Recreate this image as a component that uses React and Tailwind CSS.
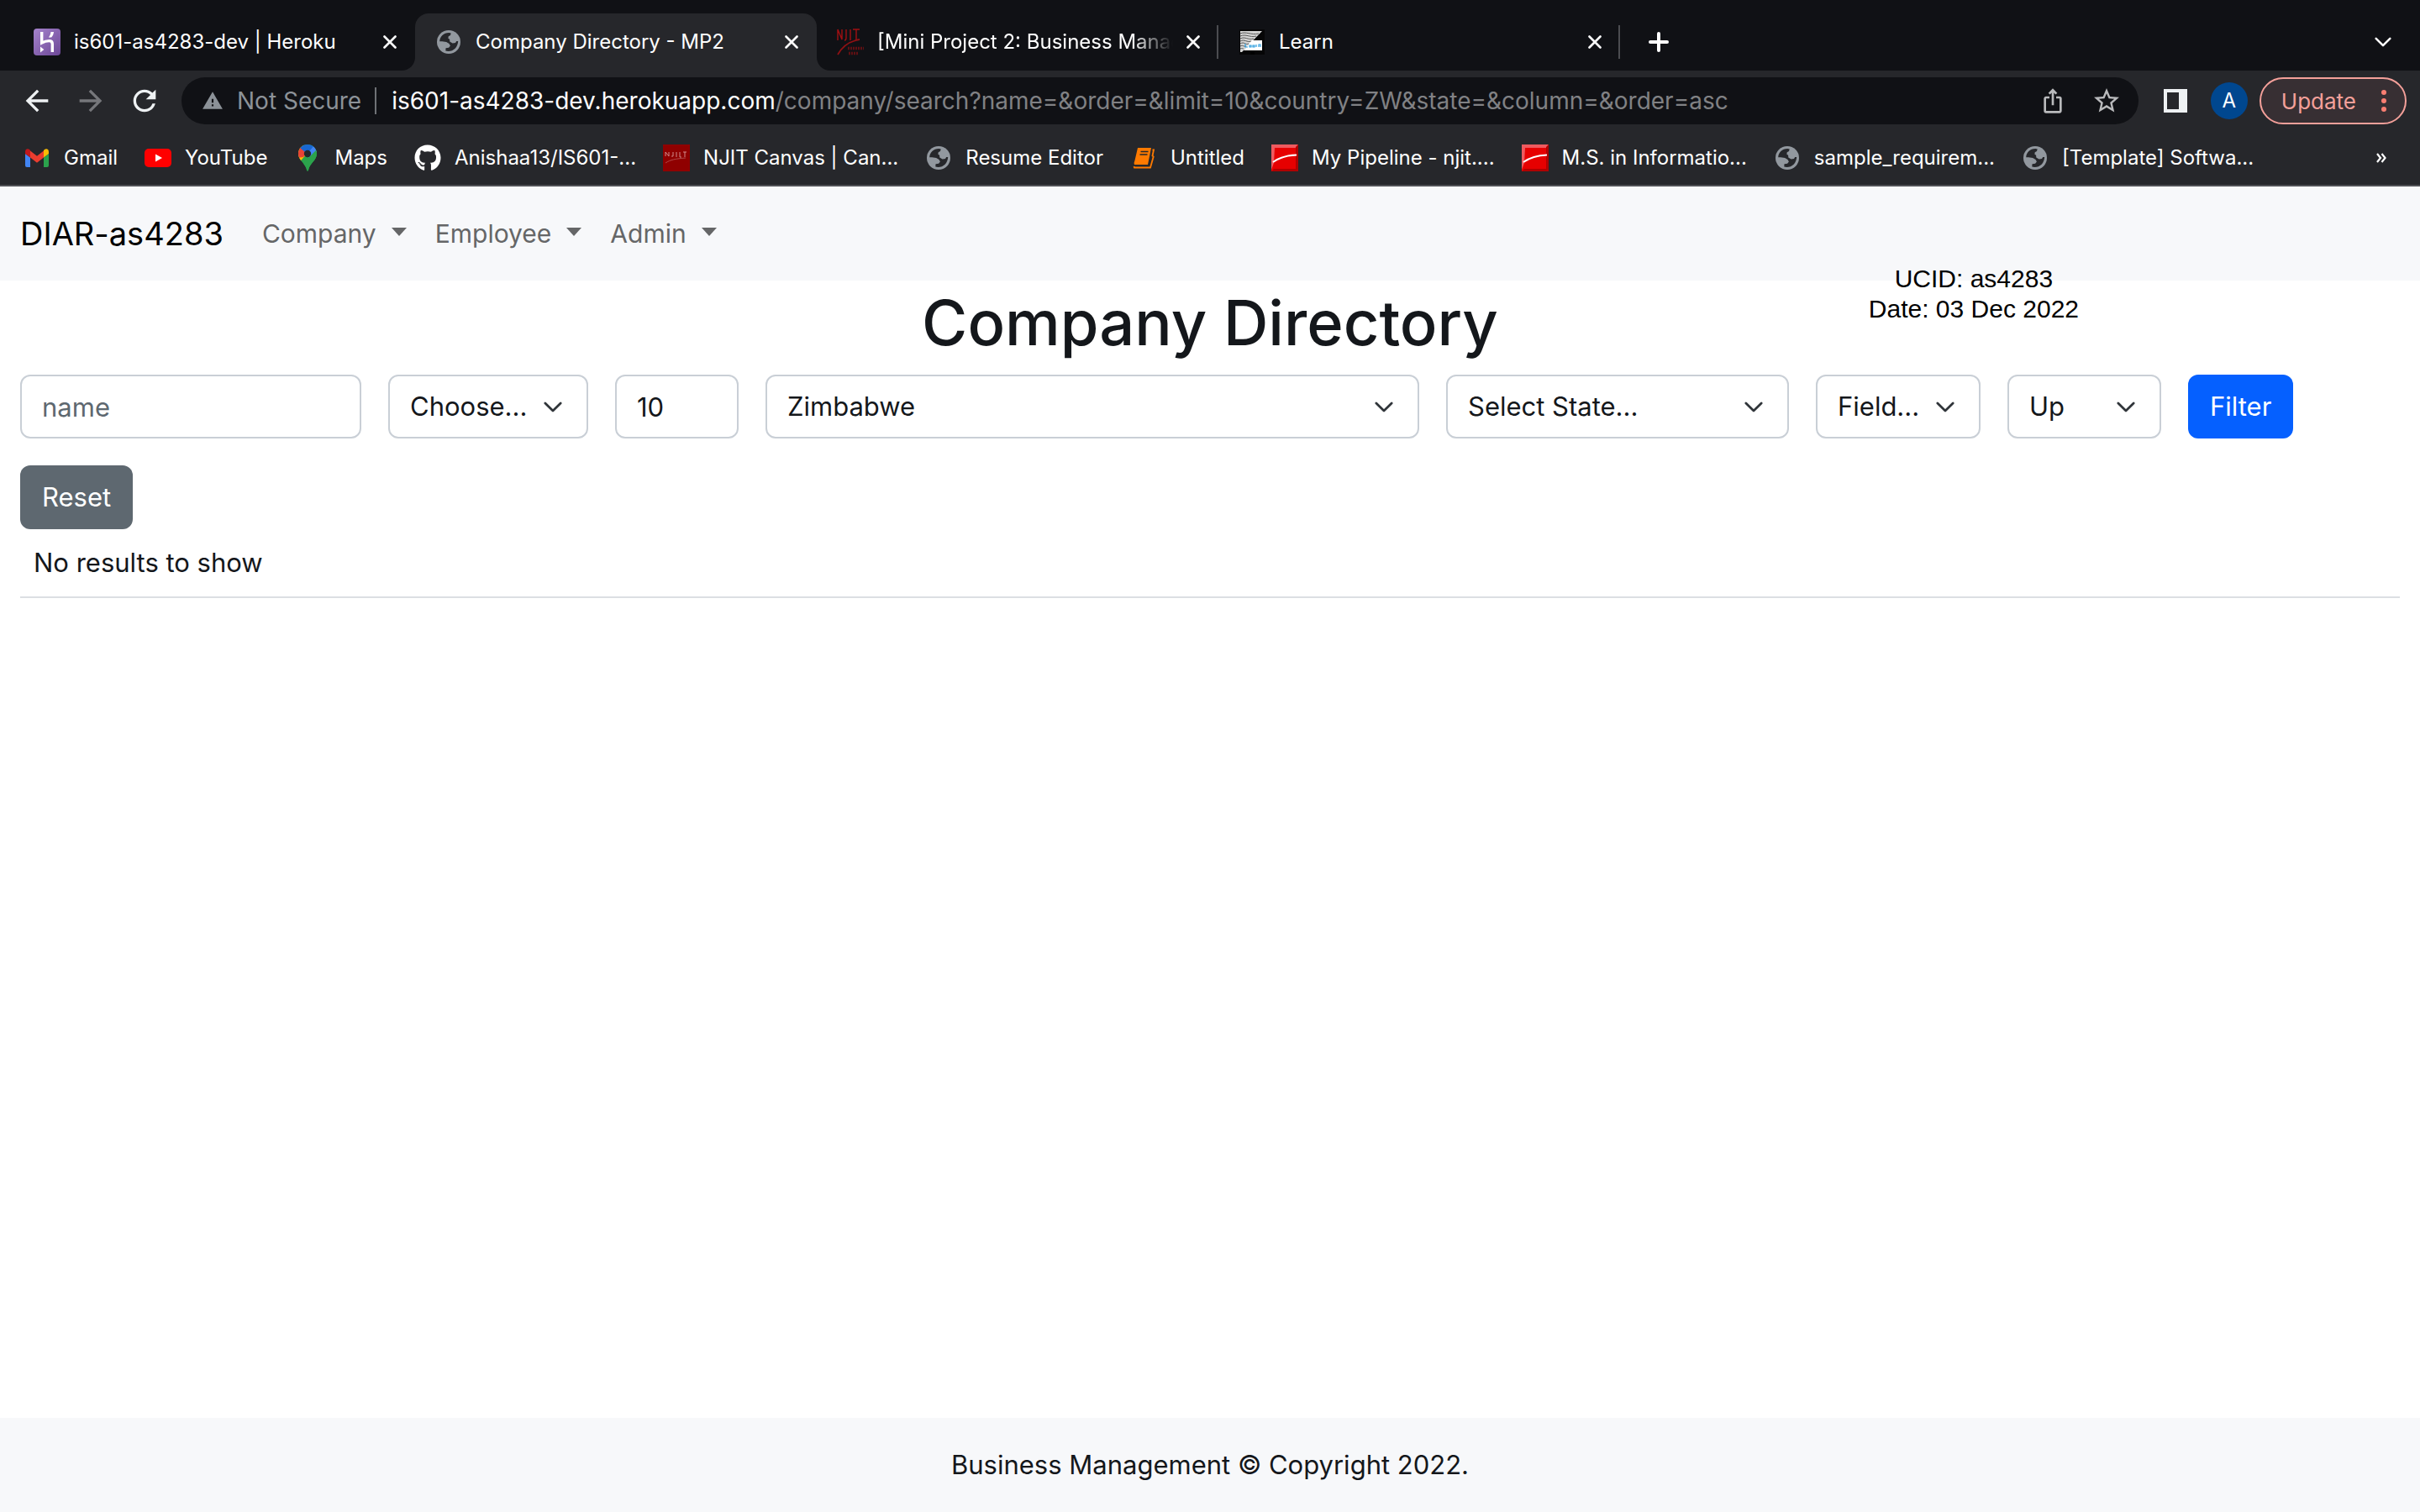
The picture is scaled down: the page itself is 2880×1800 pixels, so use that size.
import {
  MdArrowBack,
  MdArrowForward,
  MdIosShare,
  MdRefresh,
  MdStarBorder,
  MdWarning,
} from "react-icons/md";
import { FaGithub } from "react-icons/fa";

/* ---------- site icons ---------- */

function HerokuIcon() {
  return (
    <svg viewBox="0 0 32 32" className="size-8" aria-hidden="true">
      <defs>
        <linearGradient id="heroku" x1="0" y1="0" x2="1" y2="1">
          <stop offset="0" stopColor="#a583cc" />
          <stop offset="1" stopColor="#6c4796" />
        </linearGradient>
      </defs>
      <rect width="32" height="32" rx="4" fill="url(#heroku)" />
      <path d="M9.7 4v13c3-1.600 6-2.400 8.800-2.400 2.600 0 3.800 1.400 3.800 3.600V28" fill="none" stroke="#fff" strokeWidth="3.400" />
      <path d="M8 21.500l4.300 3.600L8 28.500zM20.500 4H24c-.3 2.700-1.300 4.800-2.900 6.600h-3.200c1.500-2 2.300-4 2.600-6.600z" fill="#fff" />
    </svg>
  );
}

function GlobeIcon() {
  return (
    <span className="flex size-8 items-center justify-center">
      <svg viewBox="0 0 28 28" className="size-7" aria-hidden="true">
        <circle cx="14" cy="14" r="14" fill="#92989f" />
        <path
          d="M3.200 13.200C3.500 7.500 8 3 14.500 3.100l2.200.4-.7 2.500-2.300 1.200-.3 2.600 1.700 1 .2 2.700 3.300 2 3.400-.5 1.200-2h2C24.800 20 20 25 13.500 25.100l-3.200-.6.2-3.200 3.600-.6 1.800-2.200-1.400-2.400-3.300-2-5-.8z"
          fill="#26272b"
        />
      </svg>
    </span>
  );
}

function NjitIcon() {
  return (
    <svg viewBox="0 0 32 32" className="size-8" fill="none" aria-hidden="true">
      <path d="M1 14V1l5 12V1M11 1v10q0 3-2 3M16 1v13M19 1h8M23 1v12" stroke="#a00f12" strokeWidth="1.400" />
      <path d="M1 31C6 22 15 15 27 13" stroke="#8e1114" strokeWidth="1.800" />
      <path d="M13 23.500h19M14 29.500h12" stroke="#7a1013" strokeWidth="3.400" strokeDasharray="2 1" opacity=".75" />
    </svg>
  );
}

function LearnIcon() {
  return (
    <svg viewBox="0 0 32 32" className="size-8" aria-hidden="true">
      <rect x="1" y="1" width="30" height="30" fill="#060607" />
      <path d="M2 3h26L4 28H2z" fill="#d5d5d5" />
      <path d="M2 6c7-3 12 2 22 0M2 9c7-3 11 2 19 0M2 12c6-3 9 2 16 0M2 15c5-3 8 2 13 0M2 18c5-3 6 2 10 0M2 21c3-2 4 1 7 0M2 24c2-1 3 0 4 0" fill="none" stroke="#555" />
      <path d="M16 14h12v12H6z" fill="#fff" />
      <path d="M8 18v4h3M13 20h2v2h-2zM17 20h2v2h-2zM21 22v-3M24 22v-3h2v3" fill="none" stroke="#2f9fe0" strokeWidth="1.200" />
      <path d="M14 28h5v3h-5z" fill="#000" />
    </svg>
  );
}

function GmailIcon() {
  return (
    <svg viewBox="0 0 32 32" className="size-8" aria-hidden="true">
      <path d="M2 11l6 4.500V27H4a2 2 0 0 1-2-2z" fill="#4285f4" />
      <path d="M24 15.500L30 11v14a2 2 0 0 1-2 2h-4z" fill="#2ba24c" />
      <path d="M8 7.500l8 6.200 8-6.200v8L16 21.700 8 15.500z" fill="#ea3d2f" />
      <path d="M2 8.500C2 5.500 5 4.300 7 6l1 1v8.500L2 11z" fill="#c0171c" />
      <path d="M30 8.500C30 5.500 27 4.300 25 6l-1 1v8.500L30 11z" fill="#fbbc04" />
    </svg>
  );
}

function YouTubeIcon() {
  return (
    <svg viewBox="0 0 32 32" className="size-8" aria-hidden="true">
      <rect y="5" width="32" height="22" rx="5" fill="#f00" />
      <path d="M13 11.500l8 4.500-8 4.500z" fill="#fff" />
    </svg>
  );
}

function MapsIcon() {
  return (
    <svg viewBox="0 0 32 32" className="size-8" aria-hidden="true">
      <defs>
        <clipPath id="pin">
          <path d="M16 0C9.900 0 5 4.900 5 11c0 8 8.300 11 10 19.500.3 1.700 1.700 1.700 2 0C18.700 22 27 19 27 11c0-6.100-4.900-11-11-11z" />
        </clipPath>
      </defs>
      <g clipPath="url(#pin)">
        <path d="M0 0h32v32H0z" fill="#2ba24c" />
        <path d="M4 24L22 3 8 0 0 12z" fill="#fbbc04" />
        <path d="M3 16l8-1 5-6L6 2 2 8z" fill="#ea4335" />
        <path d="M7 4l6 5 3 2 10-8L20-1H9z" fill="#1967d2" />
        <path d="M14 13L24 1l4 6-2 3-8 6z" fill="#4285f4" />
        <path d="M27 6l-9 9-7 8 6 9 12-16z" fill="#2ba24c" />
      </g>
      <circle cx="16" cy="11" r="4.200" fill="#26272b" />
    </svg>
  );
}

function GithubIcon() {
  return <FaGithub className="size-8 text-white" aria-hidden="true" />;
}

function CanvasIcon() {
  return (
    <svg viewBox="0 0 32 32" className="size-8" fill="none" aria-hidden="true">
      <rect width="32" height="32" fill="#8f0000" />
      <path d="M3 14V9l4 5V9M12 9v5h-2M16 9v6M20 9v6h2M24 9h4M26 9v6" stroke="#cf8a8a" />
      <path d="M3 22c6-4 12-5 24-6" stroke="#b04a4a" />
    </svg>
  );
}

function BookIcon() {
  return (
    <svg viewBox="0 0 32 32" className="size-8" aria-hidden="true">
      <path d="M9 4h16l-4 20H5q-1-2 .5-5z" fill="#ff7a00" />
      <path d="M26.500 6.500h1.500l-1.500 7 1.200 1L24 27.500H5l-.5-1.500" fill="none" stroke="#ff7a00" strokeWidth="1.800" />
      <path d="M12.500 8.500h9M11.500 12h9" stroke="#26272b" strokeWidth="1.400" />
    </svg>
  );
}

function SwooshIcon() {
  return (
    <svg viewBox="0 0 32 32" className="size-8" fill="none" aria-hidden="true">
      <rect width="32" height="32" fill="#e60000" />
      <path d="M0 0h32l-3 4H4L3 22l-3 8z" fill="#ee5a5f" />
      <path d="M32 0v32H0l3-3h26V3z" fill="#b00000" />
      <path d="M2 21c7-5 14-8 28-8.500" stroke="#fff" strokeWidth="2" />
    </svg>
  );
}

/* ---------- line icons ---------- */

function CloseIcon() {
  return (
    <svg viewBox="0 0 16 16" className="size-4" fill="none" stroke="currentColor" strokeWidth="2.600" strokeLinecap="round" aria-hidden="true">
      <path d="M1.500 1.500l13 13M14.500 1.500l-13 13" />
    </svg>
  );
}

function PlusIcon() {
  return (
    <svg viewBox="0 0 24 24" className="size-6" fill="none" stroke="currentColor" strokeWidth="4" strokeLinecap="round" aria-hidden="true">
      <path d="M12 2v20M2 12h20" />
    </svg>
  );
}

function ChevronIcon({ className }) {
  return (
    <svg viewBox="0 0 24 14" className={className} fill="none" stroke="currentColor" strokeWidth="3" strokeLinecap="round" strokeLinejoin="round" aria-hidden="true">
      <path d="M2 2l10 10L22 2" />
    </svg>
  );
}

function PanelIcon() {
  return (
    <svg viewBox="0 0 28 28" className="size-7" aria-hidden="true">
      <path fillRule="evenodd" d="M0 0h28v28H0zM4 4v20h14V4z" fill="#eef1f3" />
    </svg>
  );
}

function OverflowIcon() {
  return (
    <svg viewBox="0 0 12 12" className="size-3" fill="none" stroke="currentColor" strokeWidth="2.200" aria-hidden="true">
      <path d="M1 1l4 5-4 5M6.500 1l4 5-4 5" />
    </svg>
  );
}

/* ---------- browser window ---------- */

const tabs = [
  { title: "is601-as4283-dev | Heroku", Icon: HerokuIcon },
  { title: "Company Directory - MP2", Icon: GlobeIcon, active: true },
  { title: "[Mini Project 2: Business Manag", Icon: NjitIcon, divider: true, fade: true },
  { title: "Learn", Icon: LearnIcon, divider: true },
];

const bookmarks = [
  { label: "Gmail", Icon: GmailIcon },
  { label: "YouTube", Icon: YouTubeIcon },
  { label: "Maps", Icon: MapsIcon },
  { label: "Anishaa13/IS601-...", Icon: GithubIcon },
  { label: "NJIT Canvas | Can...", Icon: CanvasIcon },
  { label: "Resume Editor", Icon: GlobeIcon },
  { label: "Untitled", Icon: BookIcon },
  { label: "My Pipeline - njit....", Icon: SwooshIcon },
  { label: "M.S. in Informatio...", Icon: SwooshIcon },
  { label: "sample_requirem...", Icon: GlobeIcon },
  { label: "[Template] Softwa...", Icon: GlobeIcon },
];

function TabFlare({ className, d }) {
  return (
    <svg viewBox="0 0 16 16" className={className} aria-hidden="true">
      <path d={d} fill="#26272b" />
    </svg>
  );
}

function Tab({ title, Icon, active, divider, fade }) {
  return (
    <div
      className={
        "relative flex h-[68px] max-w-[478px] min-w-0 flex-1 items-center pr-[22px] pl-6 " +
        (active ? "rounded-t-2xl bg-[#26272b]" : "")
      }
    >
      {active && (
        <>
          <TabFlare className="absolute bottom-0 -left-4 size-4" d="M16 0v16H0C9 16 16 9 16 0z" />
          <TabFlare className="absolute -right-4 bottom-0 size-4" d="M0 0v16h16C7 16 0 9 0 0z" />
        </>
      )}
      <Icon />
      <span
        className={
          "ml-4 min-w-0 flex-1 whitespace-nowrap text-2xl text-white " +
          (fade ? "[mask-image:linear-gradient(to_right,black_86%,transparent)]" : "")
        }
      >
        {title}
      </span>
      <button type="button" aria-label={"Close " + title} className="ml-4 text-white">
        <CloseIcon />
      </button>
      {divider && <span className="absolute right-0 h-10 w-0.5 bg-[#4b4c50]" />}
    </div>
  );
}

function BrowserChrome() {
  return (
    <header className="border-b-2 border-[#4f5055] bg-[#26272b] text-white">
      <div className="flex items-center bg-[#101115] pt-4 pr-[34px] pl-4">
        <div className="flex min-w-0 flex-1 items-center">
          {tabs.map((tab) => (
            <Tab key={tab.title} {...tab} />
          ))}
          <button type="button" aria-label="New tab" className="ml-[34px]">
            <PlusIcon />
          </button>
        </div>
        <button type="button" aria-label="Search tabs">
          <ChevronIcon className="h-3 w-5" />
        </button>
      </div>

      <div className="flex items-center pt-2 pr-4 pl-6">
        <div className="flex items-center gap-6 pr-6">
          <button type="button" aria-label="Back" className="text-[#eef1f3]">
            <MdArrowBack className="size-10" />
          </button>
          <button type="button" aria-label="Forward" className="text-[#76777b]">
            <MdArrowForward className="size-10" />
          </button>
          <button type="button" aria-label="Reload" className="text-[#eef1f3]">
            <MdRefresh className="size-10" />
          </button>
        </div>
        <div className="flex h-14 min-w-0 flex-1 items-center rounded-full bg-[#101115] pr-5 pl-6 text-[28px]">
          <MdWarning className="size-[26px] shrink-0 text-[#8c9298]" aria-hidden="true" />
          <span className="ml-4 whitespace-nowrap text-[#8c9298]">Not Secure</span>
          <span className="ml-4 h-8 w-0.5 shrink-0 bg-[#6f7276]" />
          <p className="ml-[18px] min-w-0 flex-1 overflow-hidden whitespace-nowrap text-[#808184]">
            <span className="text-white">is601-as4283-dev.herokuapp.com</span>
            /company/search?name=&amp;order=&amp;limit=10&amp;country=ZW&amp;state=&amp;column=&amp;order=asc
          </p>
          <div className="flex items-center gap-[30px] text-[#b9babc]">
            <button type="button" aria-label="Share">
              <MdIosShare className="size-8" />
            </button>
            <button type="button" aria-label="Bookmark this page">
              <MdStarBorder className="size-9" />
            </button>
          </div>
        </div>
        <button type="button" aria-label="Side panel" className="ml-[30px]">
          <PanelIcon />
        </button>
        <button type="button" aria-label="Profile" className="ml-7 size-11 rounded-full bg-[#00478f] text-2xl">
          A
        </button>
        <button
          type="button"
          className="ml-[14px] flex h-14 items-center gap-[30px] rounded-full border-2 border-[#f4a09a] bg-[#372f33] pr-[22px] pl-6 text-[26px] text-[#f4a09a]"
        >
          Update
          <svg viewBox="0 0 6 26" className="h-[26px] w-1.5" fill="#f97e72" aria-hidden="true">
            <circle cx="3" cy="3" r="3" />
            <circle cx="3" cy="13" r="3" />
            <circle cx="3" cy="23" r="3" />
          </svg>
        </button>
      </div>

      <nav aria-label="Bookmarks" className="flex h-[72px] items-center justify-between pt-2 pr-10 pl-7">
        <ul className="flex items-center gap-8">
          {bookmarks.map(({ label, Icon }) => (
            <li key={label}>
              <a href="#" className="flex items-center gap-4 whitespace-nowrap text-2xl">
                <Icon />
                {label}
              </a>
            </li>
          ))}
        </ul>
        <button type="button" aria-label="More bookmarks">
          <OverflowIcon />
        </button>
      </nav>
    </header>
  );
}

/* ---------- site ---------- */

function SiteNav() {
  return (
    <nav className="flex h-28 items-center bg-[#f7f8fa] px-6">
      <a href="#" className="text-[38px] text-black">
        DIAR-as4283
      </a>
      <ul className="ml-[46px] flex items-center gap-[34px] text-[30px] text-[#656667]">
        {["Company", "Employee", "Admin"].map((name) => (
          <li key={name}>
            <button type="button" className="flex items-center gap-[18px]">
              {name}
              <svg viewBox="0 0 18 10" className="mb-1 h-2.5 w-[18px]" fill="currentColor" aria-hidden="true">
                <path d="M0 0h18l-9 10z" />
              </svg>
            </button>
          </li>
        ))}
      </ul>
    </nav>
  );
}

const field =
  "h-[76px] w-full appearance-none rounded-xl border-2 border-[#c9cfd6] bg-white px-6 text-[31px] text-[#14171b] placeholder:text-[#5e6870]";

function SelectField({ label, value, width }) {
  return (
    <div className={"relative " + width}>
      <select aria-label={label} className={field} defaultValue={value}>
        <option>{value}</option>
      </select>
      <ChevronIcon className="pointer-events-none absolute top-8 right-[31px] h-[13px] w-[22px] text-[#30353a]" />
    </div>
  );
}

export default function App() {
  return (
    <div className="flex min-h-screen flex-col bg-white font-['Inter',sans-serif] text-[#14171b]">
      <BrowserChrome />
      <div className="relative flex flex-1 flex-col">
        <SiteNav />
        <p className="absolute top-[92px] right-[406px] text-center font-['Liberation_Sans',Arial,sans-serif] text-[30px] leading-9 text-black">
          UCID: as4283
          <br />
          Date: 03 Dec 2022
        </p>
        <main className="flex-1 px-6">
          <h1 className="mb-3 text-center text-[74px] leading-[100px] font-medium">Company Directory</h1>
          <form className="flex flex-wrap gap-8" onSubmit={(e) => e.preventDefault()}>
            <div className="w-[406px]">
              <input type="text" aria-label="Name" placeholder="name" className={field} />
            </div>
            <SelectField label="Column filter" value="Choose..." width="w-[238px]" />
            <div className="w-[147px]">
              <input type="text" inputMode="numeric" aria-label="Limit" defaultValue="10" className={field} />
            </div>
            <SelectField label="Country" value="Zimbabwe" width="w-[778px]" />
            <SelectField label="State" value="Select State..." width="w-[408px]" />
            <SelectField label="Field" value="Field..." width="w-[196px]" />
            <SelectField label="Order" value="Up" width="w-[183px]" />
            <button type="submit" className="h-[76px] rounded-xl bg-[#0560ff] px-[26px] text-[31px] text-white">
              Filter
            </button>
            <button type="reset" className="h-[76px] rounded-xl bg-[#5e6870] px-[26px] text-[31px] text-white">
              Reset
            </button>
          </form>
          <table className="w-full border-collapse text-[31px] leading-[48px]">
            <tbody>
              <tr className="border-b-2 border-[#dcdfe3]">
                <td className="p-4">No results to show</td>
              </tr>
            </tbody>
          </table>
        </main>
        <footer className="flex h-28 items-center justify-center bg-[#f7f8fa] text-[31px]">
          Business Management © Copyright 2022.
        </footer>
      </div>
    </div>
  );
}
